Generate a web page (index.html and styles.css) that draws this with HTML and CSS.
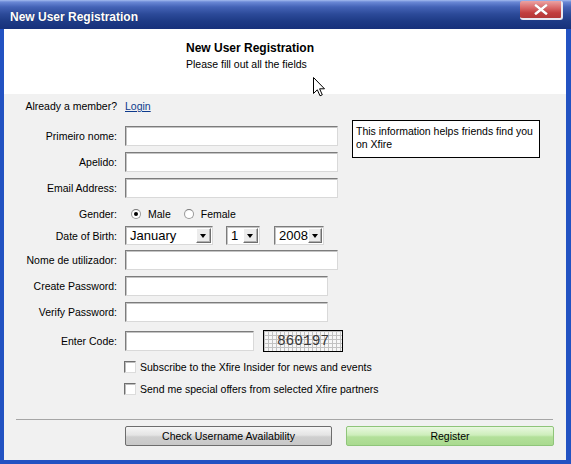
FILE: index.html
```html
<!DOCTYPE html>
<html>
<head>
<meta charset="utf-8">
<title>New User Registration</title>
<link rel="stylesheet" href="styles.css">
</head>
<body>
<div class="window">
  <div class="titlebar">
    <span class="title">New User Registration</span>
    <span class="close">
      <svg width="14" height="11" viewBox="0 0 14 11"><path d="M2 1.5 L12 9.5 M12 1.5 L2 9.5" stroke="#fff" stroke-width="2.6" stroke-linecap="square"/></svg>
    </span>
  </div>
  <div class="content">
    <div class="header">
      <div class="h-title">New User Registration</div>
      <div class="h-sub">Please fill out all the fields</div>
      <svg class="cursor" width="13" height="20" viewBox="0 0 13 20"><path d="M0.5 0.5 L0.5 16.5 L4.3 12.8 L7 18.8 L9.3 17.8 L6.6 11.8 L11.5 11.8 Z" fill="#fff" stroke="#000" stroke-width="1" stroke-linejoin="miter"/></svg>
    </div>

    <div class="form">
      <div class="label">Already a member?</div>
      <div class="cell"><a class="login" href="#">Login</a></div>

      <div class="label">Primeiro nome:</div>
      <div class="cell"><input class="field w213" type="text"></div>
      <div class="info">This information helps friends find you on Xfire</div>

      <div class="label">Apelido:</div>
      <div class="cell"><input class="field w213" type="text"></div>

      <div class="label">Email Address:</div>
      <div class="cell"><input class="field w213" type="text"></div>

      <div class="label">Gender:</div>
      <div class="cell gender">
        <span class="radio checked"></span><span class="opt">Male</span>
        <span class="radio second"></span><span class="opt">Female</span>
      </div>

      <div class="label">Date of Birth:</div>
      <div class="cell dob">
        <div class="select s-month"><span class="sel-text">January</span><span class="arrow"></span></div>
        <div class="select s-day"><span class="sel-text">1</span><span class="arrow"></span></div>
        <div class="select s-year"><span class="sel-text">2008</span><span class="arrow"></span></div>
      </div>

      <div class="label">Nome de utilizador:</div>
      <div class="cell"><input class="field w213" type="text"></div>

      <div class="label">Create Password:</div>
      <div class="cell"><input class="field w203" type="password"></div>

      <div class="label">Verify Password:</div>
      <div class="cell"><input class="field w203" type="password"></div>

      <div class="label">Enter Code:</div>
      <div class="cell code">
        <input class="field w129" type="text">
        <div class="captcha">860197</div>
      </div>

      <div class="label"></div>
      <div class="cell wide"><span class="checkbox"></span><span class="cb-text">Subscribe to the Xfire Insider for news and events</span></div>

      <div class="label"></div>
      <div class="cell wide"><span class="checkbox"></span><span class="cb-text">Send me special offers from selected Xfire partners</span></div>
    </div>

    <div class="footer">
      <div class="sep"></div>
      <div class="buttons">
        <button class="btn btn-grey" type="button">Check Username Availability</button>
        <button class="btn btn-green" type="button">Register</button>
      </div>
    </div>
  </div>
</div>
</body>
</html>
```

FILE: styles.css
```css
html, body {
  margin: 0;
  padding: 0;
  background: #1e4fbf;
}

body {
  font-family: "Liberation Sans", Arial, sans-serif;
  font-size: 10.5px;
  color: #000;
}

.window {
  width: 571px;
  height: 464px;
  box-sizing: border-box;
  display: flex;
  flex-direction: column;
  background: #2252c2;
  overflow: hidden;
}

.titlebar {
  height: 29px;
  flex: none;
  display: flex;
  align-items: flex-start;
  background: linear-gradient(to bottom, #a4bbee 0, #6a88d6 2px, #4463b6 7px, #2c4a99 14px, #1e3b86 21px, #17317b 29px);
}

.title {
  color: #fff;
  font-weight: bold;
  font-size: 12px;
  margin-left: 10px;
  line-height: 14px;
  margin-top: 10px;
  text-shadow: 0 0 1px rgba(0, 0, 0, 0.4);
}

.close {
  margin-left: auto;
  margin-right: 8px;
  margin-top: 1px;
  width: 43px;
  height: 19px;
  box-sizing: border-box;
  border-radius: 2px 2px 3px 3px;
  background: linear-gradient(to bottom, #eba2a2 0, #d96868 40%, #c23e3e 70%, #b33838 100%);
  border-right: 2px solid #e8e8f0;
  border-bottom: 2px solid #e8e8f0;
  display: flex;
  align-items: center;
  justify-content: center;
}

.close svg {
  display: block;
  filter: drop-shadow(0 0 0.6px rgba(80, 0, 0, 0.8));
}

.content {
  flex: 1;
  margin: 0 5px 4px 4px;
  background: #f1f1f1;
  display: flex;
  flex-direction: column;
}

.header {
  height: 65px;
  flex: none;
  box-sizing: border-box;
  background: #fff;
  padding: 11px 0 0 182px;
  position: relative;
}

.h-title {
  font-weight: bold;
  font-size: 12px;
  line-height: 16px;
}

.h-sub {
  line-height: 16px;
}

.cursor {
  position: absolute;
  left: 309px;
  top: 48px;
}

.form {
  padding-top: 2px;
  display: grid;
  grid-template-columns: 113px 213px 1fr;
  grid-template-rows: 30px 26px 26px 26px 22px 24px 26px 26px 29px 26px 22px 20px;
  column-gap: 8px;
  align-items: start;
}

.label {
  grid-column: 1;
  height: 20px;
  line-height: 21px;
  text-align: right;
  white-space: nowrap;
}

.cell {
  grid-column: 2;
  height: 20px;
  display: flex;
  align-items: center;
}

.cell.wide {
  grid-column: 2 / 4;
}

.login {
  color: #0e3a8c;
  text-decoration: underline;
}

.field {
  display: block;
  height: 20px;
  margin: 0;
  padding: 0 3px;
  box-sizing: border-box;
  background: #fff;
  border: 1px solid;
  border-color: #7c7c7c #d9d9d9 #d9d9d9 #7c7c7c;
  box-shadow: inset 1px 1px 0 #c4c4c4;
  font: inherit;
  outline: none;
}

.w213 { width: 213px; }
.w203 { width: 203px; }
.w129 { width: 129px; }

.info {
  grid-column: 3;
  grid-row: 2 / span 2;
  margin: -6px 0 0 6px;
  width: 188px;
  height: 38px;
  box-sizing: border-box;
  border: 1px solid #000;
  background: #fff;
  padding: 4px 2px 0 3px;
  line-height: 13px;
}

.gender .radio {
  width: 10px;
  height: 10px;
  box-sizing: border-box;
  border-radius: 50%;
  border: 1px solid #9a9a9a;
  border-top-color: #7a7a7a;
  background: radial-gradient(circle at 60% 60%, #fff 0, #fff 50%, #e6e6e6 100%);
  margin-left: 6px;
  position: relative;
}

.gender .radio.second {
  margin-left: 13px;
}

.gender .radio.checked::after {
  content: "";
  position: absolute;
  left: 2px;
  top: 2px;
  width: 4px;
  height: 4px;
  border-radius: 50%;
  background: #000;
}

.gender .opt {
  margin-left: 7px;
}

.dob {
  align-items: flex-start;
}

.select {
  height: 19px;
  box-sizing: border-box;
  background: #fff;
  border: 1px solid;
  border-color: #7c7c7c #d9d9d9 #d9d9d9 #7c7c7c;
  box-shadow: inset 1px 1px 0 #c4c4c4;
  display: flex;
  align-items: center;
  font-size: 13px;
  position: relative;
}

.sel-text {
  padding-left: 4px;
  line-height: 17px;
}

.s-month { width: 88px; }
.s-day { width: 34px; margin-left: 13px; }
.s-year { width: 50px; margin-left: 14px; }

.arrow {
  margin-left: auto;
  margin-right: 1px;
  width: 15px;
  height: 15px;
  box-sizing: border-box;
  background: #ececec;
  border: 1px solid;
  border-color: #fff #6f6f6f #6f6f6f #fff;
  box-shadow: inset -1px -1px 0 #b0b0b0;
  position: relative;
}

.arrow::after {
  content: "";
  position: absolute;
  left: 3px;
  top: 5px;
  border-left: 3.5px solid transparent;
  border-right: 3.5px solid transparent;
  border-top: 4px solid #000;
}

.code {
  align-items: center;
}

.captcha {
  margin-left: 9px;
  width: 80px;
  height: 22px;
  flex: none;
  box-sizing: border-box;
  border: 1px solid #000;
  background-color: #f7f7f7;
  background-image:
    repeating-linear-gradient(to right, #c2c2c2 0, #c2c2c2 1px, transparent 1px, transparent 4px),
    repeating-linear-gradient(to bottom, #c2c2c2 0, #c2c2c2 1px, transparent 1px, transparent 4px);
  font-family: "Liberation Mono", "Courier New", monospace;
  font-size: 14.5px;
  line-height: 20px;
  color: #3a3a3a;
  text-align: center;
  letter-spacing: 0;
}

.checkbox {
  width: 12px;
  height: 12px;
  box-sizing: border-box;
  margin-left: -1px;
  background: #fff;
  border: 1px solid;
  border-color: #6f6f6f #dcdcdc #dcdcdc #6f6f6f;
  box-shadow: inset 1px 1px 0 #bdbdbd;
  flex: none;
}

.cb-text {
  margin-left: 4px;
  white-space: nowrap;
}

.footer {
  margin-top: 20px;
}

.sep {
  height: 1px;
  margin: 0 13px 0 12px;
  background: #a6a6a6;
}

.buttons {
  margin-top: 6px;
  display: flex;
  padding-left: 121px;
}

.btn {
  height: 20px;
  margin: 0;
  padding: 0;
  box-sizing: border-box;
  font: inherit;
  color: #000;
  border-radius: 2px;
  line-height: 18px;
}

.btn-grey {
  width: 207px;
  border: 1px solid #6d6d6d;
  background: linear-gradient(to bottom, #f6f6f6 0, #e4e4e4 45%, #cfcfcf 55%, #c8c8c8 100%);
}

.btn-green {
  width: 208px;
  margin-left: 14px;
  border: 1px solid #8fc57a;
  background: linear-gradient(to bottom, #e9f8df 0, #cdeebb 45%, #b3e09a 55%, #a9da8f 100%);
}
```
